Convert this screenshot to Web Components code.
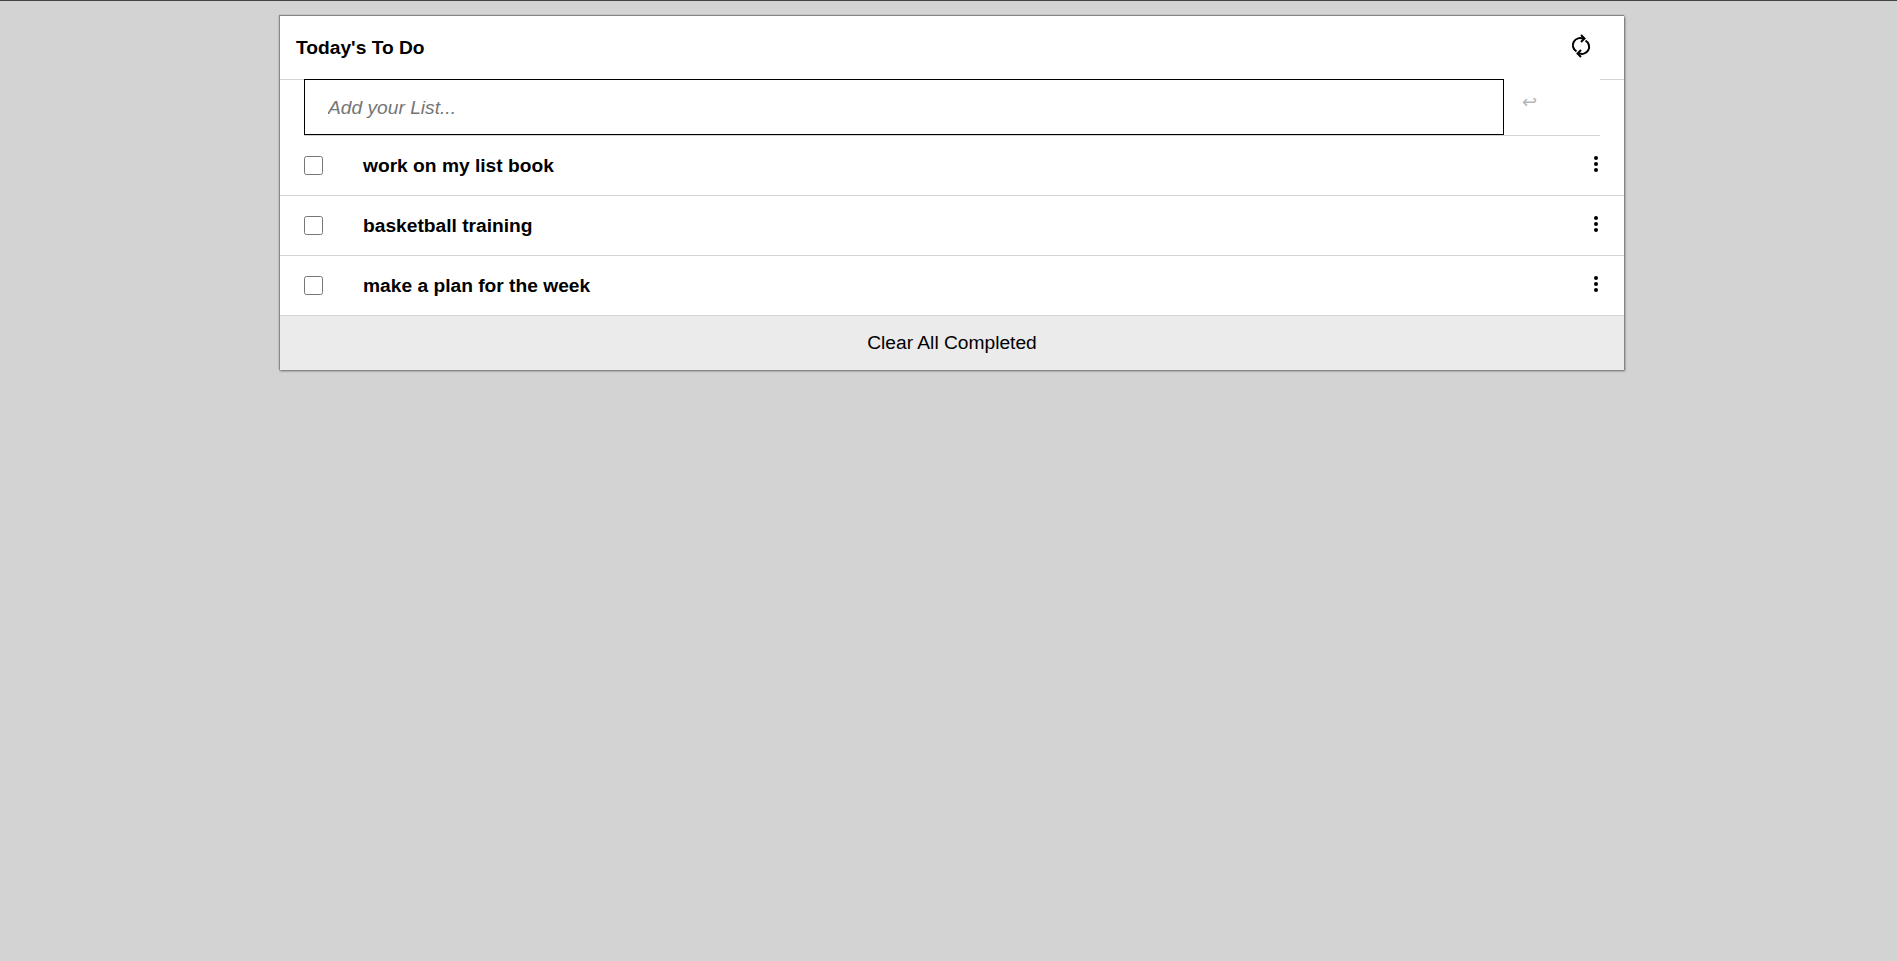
<!DOCTYPE html>
<html lang="en">
<head>
<meta charset="utf-8">
<title>Today's To Do</title>
<style>
  html, body { margin: 0; height: 100%; }
  body {
    background: #d3d3d3;
    border-top: 1px solid #444;
    box-sizing: border-box;
    font-family: "Liberation Sans", Arial, sans-serif;
    color: #000;
  }
</style>
</head>
<body>
<todo-app>
  <todo-header title="Today's To Do"></todo-header>
  <todo-form placeholder="Add your List..."></todo-form>
  <todo-item>work on my list book</todo-item>
  <todo-item>basketball training</todo-item>
  <todo-item>make a plan for the week</todo-item>
  <todo-footer>Clear All Completed</todo-footer>
</todo-app>

<script>
// caja principal de la lista
class TodoApp extends HTMLElement {
  constructor() {
    super();
    this.attachShadow({ mode: 'open' });
    this.shadowRoot.innerHTML = `
      <style>
        :host { display: block; padding: 15px 273px 0 279px; }
        .card {
          background: #fff;
          border-left: 1px solid #8a8a8a;
          box-shadow: 1px 1px 2px #666, 0 -1px 1px #888;
        }
      </style>
      <div class="card"><slot></slot></div>
    `;
  }
}

class TodoHeader extends HTMLElement {
  constructor() {
    super();
    this.attachShadow({ mode: 'open' });
  }
  connectedCallback() {
    this.shadowRoot.innerHTML = `
      <style>
        :host {
          display: flex; align-items: center; justify-content: space-between;
          height: 64px; box-sizing: border-box;
          padding: 0 33px 0 16px;
          border-bottom: 1px solid #d3d3d3;
        }
        h1 { margin: 0; font-size: 19.2px; font-weight: 700; }
        svg { display: block; margin-bottom: 4px; }
      </style>
      <h1>${this.getAttribute('title')}</h1>
      <svg width="20" height="24" viewBox="0 0 20 24" fill="none" stroke="#000" stroke-width="2">
        <path d="M5.5 17.4 A7 7 0 0 1 12.5 5"/>
        <path d="M14.5 6.6 A7 7 0 0 1 7.5 19"/>
        <path d="M10 1 L13.5 4.5 L10 8"/>
        <path d="M10 16 L6.5 19.5 L10 23"/>
      </svg>
    `;
  }
}

class TodoForm extends HTMLElement {
  constructor() {
    super();
    this.attachShadow({ mode: 'open' });
  }
  connectedCallback() {
    this.shadowRoot.innerHTML = `
      <style>
        :host {
          display: flex; height: 57px; box-sizing: border-box;
          margin: -1px 24px 0; background: #fff;
          border-bottom: 1px solid #d3d3d3;
          position: relative;
        }
        input {
          width: 1200px; flex: none; box-sizing: border-box; height: 56px;
          border: 1px solid #000; border-radius: 0; outline: none;
          padding: 1px 23px 0; background: #fff;
          font: italic 19.2px "Liberation Sans", Arial, sans-serif;
        }
        input::placeholder { color: #757575; opacity: 1; }
        button {
          width: 96px; height: 45px; border: 0; background: none;
          color: #b5b5b5; font: 18px "DejaVu Sans", sans-serif;
          text-align: left; padding: 0 0 0 18px;
        }
      </style>
      <input type="text" placeholder="${this.getAttribute('placeholder')}">
      <button type="button">↩</button>
    `;
  }
}

class TodoItem extends HTMLElement {
  constructor() {
    super();
    this.attachShadow({ mode: 'open' });
    this.shadowRoot.innerHTML = `
      <style>
        :host {
          display: flex; align-items: center;
          height: 60px; box-sizing: border-box;
          padding: 0 24px;
          border-bottom: 1px solid #d3d3d3;
        }
        input { width: 19px; height: 19px; margin: 0 40px 0 0; flex: none; }
        .name { flex: 1; font-size: 19.2px; font-weight: 700; }
        .menu { display: flex; flex-direction: column; gap: 1.5px; margin: 0 2px 3px 0; }
        .menu i { display: block; width: 4.5px; height: 4.5px; border-radius: 50%; background: #000; }
      </style>
      <input type="checkbox">
      <span class="name"><slot></slot></span>
      <span class="menu"><i></i><i></i><i></i></span>
    `;
  }
}

class TodoFooter extends HTMLElement {
  constructor() {
    super();
    this.attachShadow({ mode: 'open' });
    this.shadowRoot.innerHTML = `
      <style>
        :host {
          display: block; height: 54px; line-height: 54px;
          background: #ebebeb; text-align: center;
          font-size: 19.2px;
        }
      </style>
      <slot></slot>
    `;
  }
}

customElements.define('todo-app', TodoApp);
customElements.define('todo-header', TodoHeader);
customElements.define('todo-form', TodoForm);
customElements.define('todo-item', TodoItem);
customElements.define('todo-footer', TodoFooter);
</script>
</body>
</html>
